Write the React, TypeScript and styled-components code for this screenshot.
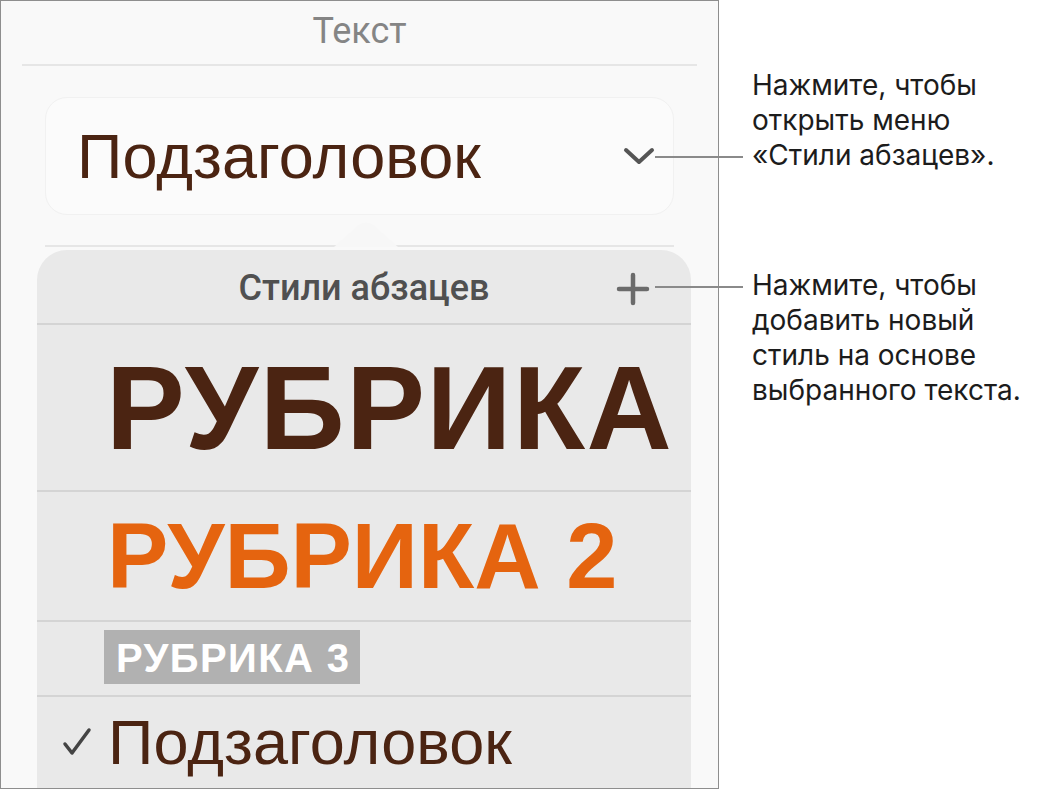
import React from 'react';
import styled, { createGlobalStyle } from 'styled-components';

const GlobalStyle = createGlobalStyle`
  html, body {
    margin: 0;
    padding: 0;
    background: #ffffff;
  }
  * {
    box-sizing: border-box;
  }
`;

const Page = styled.div`
  display: flex;
  width: 1037px;
  height: 790px;
  overflow: hidden;
`;

const Panel = styled.section`
  position: relative;
  width: 719px;
  height: 789px;
  flex-shrink: 0;
  border: 1px solid #8e8e8e;
  background: #f9f9f9;
  display: flex;
  flex-direction: column;
  overflow: hidden;
  font-family: 'Liberation Sans', Arial, sans-serif;
`;

const PanelTitle = styled.div`
  height: 63px;
  padding-top: 10px;
  text-align: center;
  font-family: Roboto, 'Liberation Sans', sans-serif;
  font-size: 36px;
  color: #858585;
  line-height: 40px;
`;

const Divider = styled.div<{ $inset: string; $color?: string }>`
  height: 2px;
  margin: ${({ $inset }) => $inset};
  background: ${({ $color }) => $color || '#e6e6e6'};
  flex-shrink: 0;
`;

const Dropdown = styled.div`
  margin: 31px 44px 0 44px;
  height: 118px;
  border-radius: 22px;
  background: #fbfbfb;
  border: 1px solid #f1f1f1;
  display: flex;
  align-items: center;
  justify-content: space-between;
  padding: 0 18px 0 31px;
`;

const StyleName = styled.span`
  font-size: 63px;
  color: #4b2412;
  line-height: 1;
  letter-spacing: 0.1px;
`;

const ArrowZone = styled.div`
  position: relative;
  height: 30px;
  flex-shrink: 0;
`;

const PopArrow = styled.svg`
  position: absolute;
  left: 333px;
  top: 6px;
`;

const Popover = styled.div`
  flex: 1;
  margin: 3px 27px 0 36px;
  background: #e9e9e9;
  border-radius: 30px 30px 0 0;
  display: flex;
  flex-direction: column;
`;

const PopHeader = styled.div`
  position: relative;
  height: 73px;
  display: flex;
  align-items: center;
  justify-content: center;
  padding-top: 2px;
  font-family: Roboto, 'Liberation Sans', sans-serif;
  font-weight: 500;
  font-size: 36px;
  color: #505050;
`;

const PlusButton = styled.svg`
  position: absolute;
  right: 41px;
  top: 22px;
`;

const Row = styled.div<{ $h: number; $left?: number }>`
  height: ${({ $h }) => $h}px;
  display: flex;
  align-items: center;
  padding-left: ${({ $left }) => $left ?? 70}px;
  border-top: 2px solid #d4d4d4;
`;

const Heading = styled.span<{ $size: number; $color: string; $track?: number }>`
  font-weight: 700;
  font-size: ${({ $size }) => $size}px;
  color: ${({ $color }) => $color};
  letter-spacing: ${({ $track }) => $track ?? 0}px;
  line-height: 1;
  white-space: nowrap;
`;

const Heading3 = styled.span`
  display: inline-flex;
  align-items: center;
  height: 54px;
  padding: 3px 10px 0 12px;
  margin-top: -4px;
  background: #b1b1b1;
  color: #ffffff;
  font-weight: 700;
  font-size: 40px;
  letter-spacing: 1.4px;
  white-space: nowrap;
`;

const CheckMark = styled.svg`
  margin-right: 16px;
  margin-top: -2px;
`;

const Notes = styled.aside`
  display: flex;
  flex-direction: column;
  gap: 95px;
  padding: 68px 0 0 33px;
`;

const Note = styled.p<{ $leaderLine: number }>`
  position: relative;
  margin: 0;
  font-family: Inter, 'Noto Sans', sans-serif;
  font-size: 28px;
  line-height: 35px;
  color: #1c1c1c;
  white-space: nowrap;

  &::before {
    content: '';
    position: absolute;
    left: -97px;
    width: 88px;
    top: ${({ $leaderLine }) => $leaderLine * 35 + 18}px;
    height: 2px;
    background: #8a8a8a;
  }
`;

const App: React.FC = () => {
  return (
    <>
      <GlobalStyle />
      <Page>
        <Panel>
          <PanelTitle>Текст</PanelTitle>
          <Divider $inset="0 21px" />
          <Dropdown>
            <StyleName>Подзаголовок</StyleName>
            <svg width="32" height="20" viewBox="0 0 32 20">
              <polyline
                points="3,4 16,16 29,4"
                fill="none"
                stroke="#555"
                strokeWidth="4"
                strokeLinecap="round"
                strokeLinejoin="round"
              />
            </svg>
          </Dropdown>
          <ArrowZone>
            <PopArrow width="64" height="26" viewBox="0 0 64 26">
              <path
                d="M0 26 L25 4 Q32 -1 39 4 L64 26 Z"
                fill="#f7f7f7"
              />
            </PopArrow>
          </ArrowZone>
          <Divider $inset="0 44px" />
          <Popover>
            <PopHeader>
              Стили абзацев
              <PlusButton width="34" height="34" viewBox="0 0 34 34">
                <path
                  d="M17 3 V31 M3 17 H31"
                  stroke="#6b6b6b"
                  strokeWidth="4.5"
                  strokeLinecap="round"
                />
              </PlusButton>
            </PopHeader>
            <Row $h={167} $left={69}>
              <Heading $size={118} $color="#4b2412" $track={1.6}>РУБРИКА</Heading>
            </Row>
            <Row $h={130} $left={70}>
              <Heading $size={92} $color="#e5640f">РУБРИКА 2</Heading>
            </Row>
            <Row $h={75} $left={67}>
              <Heading3>РУБРИКА 3</Heading3>
            </Row>
            <Row $h={93} $left={25}>
              <CheckMark width="30" height="30" viewBox="0 0 30 30">
                <path
                  d="M3 17 L10 26 L27 3"
                  fill="none"
                  stroke="#444"
                  strokeWidth="3.5"
                  strokeLinecap="round"
                  strokeLinejoin="round"
                />
              </CheckMark>
              <StyleName>Подзаголовок</StyleName>
            </Row>
          </Popover>
        </Panel>
        <Notes>
          <Note $leaderLine={2}>
            Нажмите, чтобы
            <br />
            открыть меню
            <br />
            «Стили абзацев».
          </Note>
          <Note $leaderLine={0}>
            Нажмите, чтобы
            <br />
            добавить новый
            <br />
            стиль на основе
            <br />
            выбранного текста.
          </Note>
        </Notes>
      </Page>
    </>
  );
};

export default App;
